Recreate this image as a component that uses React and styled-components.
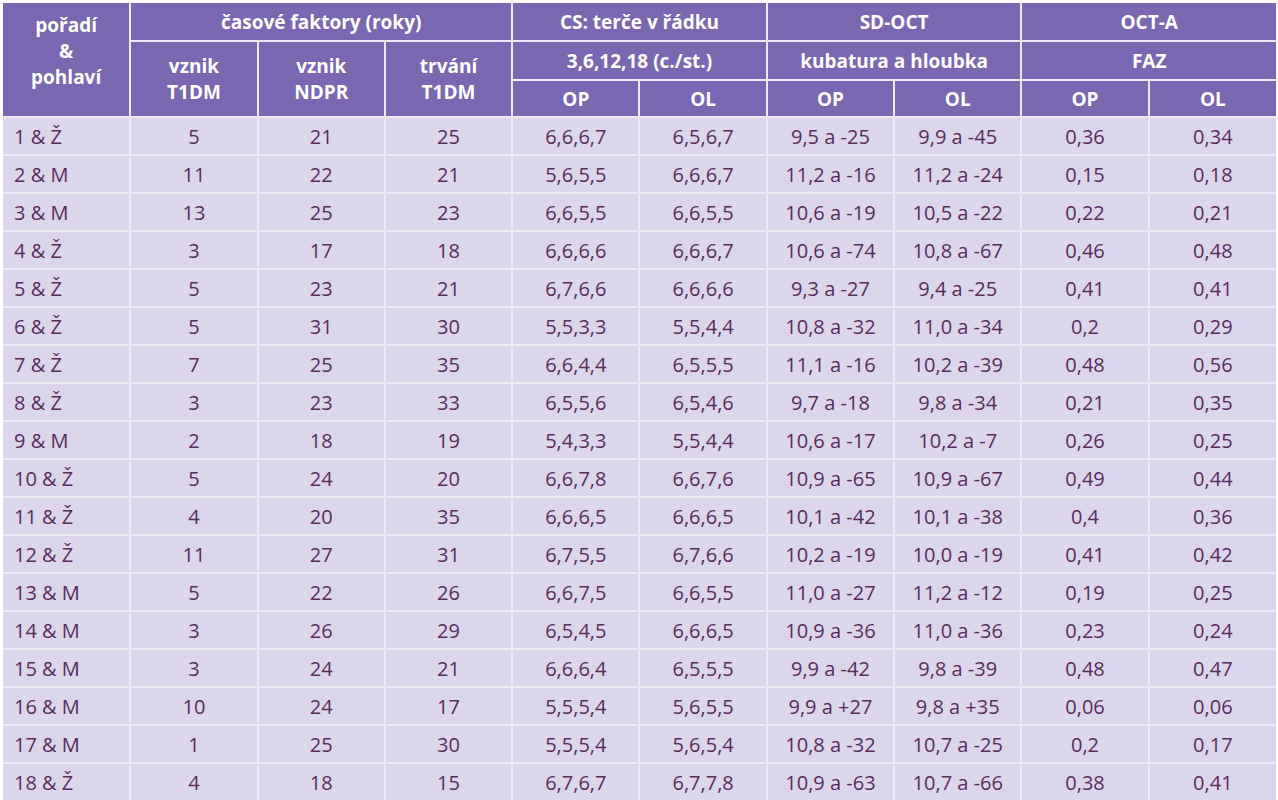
import React from "react";
import styled, { createGlobalStyle } from "styled-components";

const colors = {
  head: "#7968b1",
  body: "#dbd6ec",
  line: "#eceaf5",
  text: "#5a2c5c",
  white: "#ffffff",
};

const GlobalStyle = createGlobalStyle`
  html, body {
    margin: 0;
    padding: 0;
    background: ${colors.white};
  }
  body {
    font-family: "Open Sans", "Noto Sans", sans-serif;
  }
`;

const Page = styled.div`
  padding: 3px 2px 0 3px;
  height: 800px;
  box-sizing: border-box;
  overflow: hidden;
`;

const Table = styled.table`
  width: 100%;
  table-layout: fixed;
  border-collapse: collapse;
`;

const HeadCell = styled.th`
  background: ${colors.head};
  color: ${colors.white};
  font-weight: 700;
  font-size: 19px;
  line-height: 26px;
  text-align: center;
  vertical-align: ${(p) => (p.$top ? "top" : "middle")};
  padding: ${(p) => (p.$top ? "9px 0 0" : "0")};
  border: 2px solid ${colors.line};
  border-top: none;
  height: ${(p) => p.$h || 37}px;
  &:first-child {
    border-left: none;
  }
  &:last-child {
    border-right: none;
  }
`;

const Cell = styled.td`
  background: ${colors.body};
  color: ${colors.text};
  font-size: 20px;
  text-align: ${(p) => (p.$left ? "left" : "center")};
  padding: ${(p) => (p.$left ? "0 0 0 11px" : "0")};
  height: 36px;
  border: 2px solid ${colors.line};
  &:first-child {
    border-left: none;
  }
  &:last-child {
    border-right: none;
  }
`;

const rows = [
  ["1 & Ž", 5, 21, 25, "6,6,6,7", "6,5,6,7", "9,5 a -25", "9,9 a -45", "0,36", "0,34"],
  ["2 & M", 11, 22, 21, "5,6,5,5", "6,6,6,7", "11,2 a -16", "11,2 a -24", "0,15", "0,18"],
  ["3 & M", 13, 25, 23, "6,6,5,5", "6,6,5,5", "10,6 a -19", "10,5 a -22", "0,22", "0,21"],
  ["4 & Ž", 3, 17, 18, "6,6,6,6", "6,6,6,7", "10,6 a -74", "10,8 a -67", "0,46", "0,48"],
  ["5 & Ž", 5, 23, 21, "6,7,6,6", "6,6,6,6", "9,3 a -27", "9,4 a -25", "0,41", "0,41"],
  ["6 & Ž", 5, 31, 30, "5,5,3,3", "5,5,4,4", "10,8 a -32", "11,0 a -34", "0,2", "0,29"],
  ["7 & Ž", 7, 25, 35, "6,6,4,4", "6,5,5,5", "11,1 a -16", "10,2 a -39", "0,48", "0,56"],
  ["8 & Ž", 3, 23, 33, "6,5,5,6", "6,5,4,6", "9,7 a -18", "9,8 a -34", "0,21", "0,35"],
  ["9 & M", 2, 18, 19, "5,4,3,3", "5,5,4,4", "10,6 a -17", "10,2 a -7", "0,26", "0,25"],
  ["10 & Ž", 5, 24, 20, "6,6,7,8", "6,6,7,6", "10,9 a -65", "10,9 a -67", "0,49", "0,44"],
  ["11 & Ž", 4, 20, 35, "6,6,6,5", "6,6,6,5", "10,1 a -42", "10,1 a -38", "0,4", "0,36"],
  ["12 & Ž", 11, 27, 31, "6,7,5,5", "6,7,6,6", "10,2 a -19", "10,0 a -19", "0,41", "0,42"],
  ["13 & M", 5, 22, 26, "6,6,7,5", "6,6,5,5", "11,0 a -27", "11,2 a -12", "0,19", "0,25"],
  ["14 & M", 3, 26, 29, "6,5,4,5", "6,6,6,5", "10,9 a -36", "11,0 a -36", "0,23", "0,24"],
  ["15 & M", 3, 24, 21, "6,6,6,4", "6,5,5,5", "9,9 a -42", "9,8 a -39", "0,48", "0,47"],
  ["16 & M", 10, 24, 17, "5,5,5,4", "5,6,5,5", "9,9 a +27", "9,8 a +35", "0,06", "0,06"],
  ["17 & M", 1, 25, 30, "5,5,5,4", "5,6,5,4", "10,8 a -32", "10,7 a -25", "0,2", "0,17"],
  ["18 & Ž", 4, 18, 15, "6,7,6,7", "6,7,7,8", "10,9 a -63", "10,7 a -66", "0,38", "0,41"],
];

export default function App() {
  return (
    <Page>
      <GlobalStyle />
      <Table>
        <colgroup>
          {Array.from({ length: 10 }).map((_, i) => (
            <col key={i} />
          ))}
        </colgroup>
        <thead>
          <tr>
            <HeadCell rowSpan={3} $top>
              pořadí
              <br />&amp;
              <br />
              pohlaví
            </HeadCell>
            <HeadCell colSpan={3}>časové faktory (roky)</HeadCell>
            <HeadCell colSpan={2}>CS: terče v řádku</HeadCell>
            <HeadCell colSpan={2}>SD-OCT</HeadCell>
            <HeadCell colSpan={2}>OCT-A</HeadCell>
          </tr>
          <tr>
            <HeadCell rowSpan={2}>
              vznik
              <br />
              T1DM
            </HeadCell>
            <HeadCell rowSpan={2}>
              vznik
              <br />
              NDPR
            </HeadCell>
            <HeadCell rowSpan={2}>
              trvání
              <br />
              T1DM
            </HeadCell>
            <HeadCell colSpan={2}>3,6,12,18 (c./st.)</HeadCell>
            <HeadCell colSpan={2}>kubatura a hloubka</HeadCell>
            <HeadCell colSpan={2}>FAZ</HeadCell>
          </tr>
          <tr>
            {["OP", "OL", "OP", "OL", "OP", "OL"].map((t, i) => (
              <HeadCell key={i} $h={35}>
                {t}
              </HeadCell>
            ))}
          </tr>
        </thead>
        <tbody>
          {rows.map((r, i) => (
            <tr key={i}>
              {r.map((v, j) => (
                <Cell key={j} $left={j === 0}>
                  {v}
                </Cell>
              ))}
            </tr>
          ))}
        </tbody>
      </Table>
    </Page>
  );
}
